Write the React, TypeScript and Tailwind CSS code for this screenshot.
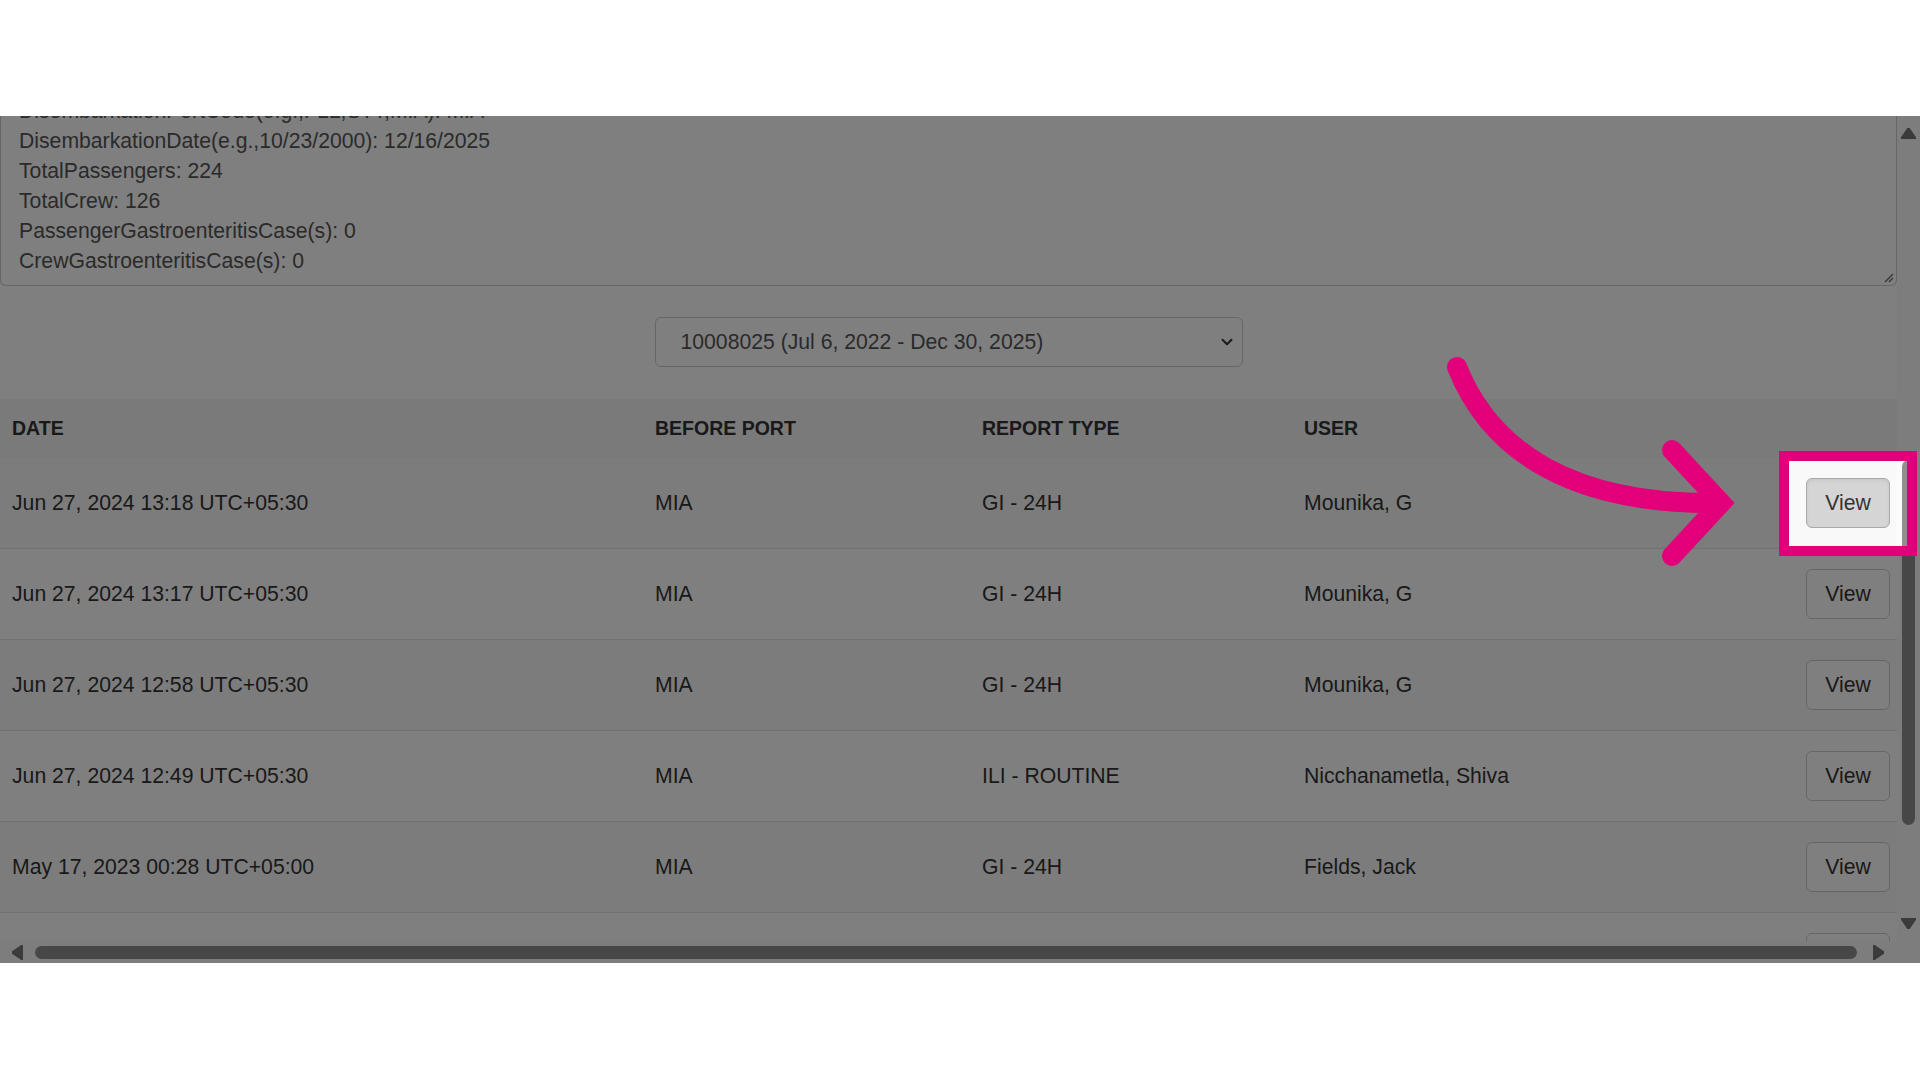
import { ChevronDown } from "lucide-react";

interface ReportRow {
  id: string;
  date: string;
  port: string;
  type: string;
  user: string;
}

const notes = [
  "DisembarkationPortCode(e.g.,FLL,STT,MIA): MIA",
  "DisembarkationDate(e.g.,10/23/2000): 12/16/2025",
  "TotalPassengers: 224",
  "TotalCrew: 126",
  "PassengerGastroenteritisCase(s): 0",
  "CrewGastroenteritisCase(s): 0",
];

const reports: ReportRow[] = [
  { id: "r1", date: "Jun 27, 2024 13:18 UTC+05:30", port: "MIA", type: "GI - 24H", user: "Mounika, G" },
  { id: "r2", date: "Jun 27, 2024 13:17 UTC+05:30", port: "MIA", type: "GI - 24H", user: "Mounika, G" },
  { id: "r3", date: "Jun 27, 2024 12:58 UTC+05:30", port: "MIA", type: "GI - 24H", user: "Mounika, G" },
  { id: "r4", date: "Jun 27, 2024 12:49 UTC+05:30", port: "MIA", type: "ILI - ROUTINE", user: "Nicchanametla, Shiva" },
  { id: "r5", date: "May 17, 2023 00:28 UTC+05:00", port: "MIA", type: "GI - 24H", user: "Fields, Jack" },
];

function Triangle({ dir }: { dir: "up" | "down" | "left" | "right" }) {
  const points = {
    up: "7.5,0 15,11 0,11",
    down: "0,0 15,0 7.5,11",
    left: "11,0 11,15 0,7.5",
    right: "0,0 11,7.5 0,15",
  }[dir];
  const vertical = dir === "up" || dir === "down";
  return (
    <svg width={vertical ? 15 : 11} height={vertical ? 11 : 15} viewBox={vertical ? "0 0 15 11" : "0 0 11 15"}>
      <polygon points={points} fill="#767676" strokeLinejoin="round" stroke="#767676" strokeWidth={2} />
    </svg>
  );
}

function VScrollbar() {
  return (
    <div className="w-[23px] shrink-0 bg-[#fbfbfb] flex flex-col items-center">
      <div className="mt-[12px]">
        <Triangle dir="up" />
      </div>
      <div className="mt-[321px] w-[13px] h-[365px] rounded-full bg-[#8f8f8f]" />
      <div className="mt-[93px]">
        <Triangle dir="down" />
      </div>
    </div>
  );
}

function HScrollbar() {
  return (
    <div className="h-[22px] shrink-0 flex bg-[#fbfbfb]">
      <div className="w-[1897px] flex items-center">
        <div className="ml-[12px]">
          <Triangle dir="left" />
        </div>
        <div className="ml-[12px] w-[1822px] h-[13px] rounded-full bg-[#8f8f8f]" />
        <div className="ml-[16px]">
          <Triangle dir="right" />
        </div>
      </div>
      <div className="flex-1 bg-[#fbfbfb]" />
    </div>
  );
}

function ViewButton({ active }: { active?: boolean }) {
  return (
    <button
      className={`w-[84px] h-[50px] rounded-[6px] border text-[21.2px] text-[#333333] ${
        active
          ? "bg-[#d5d5d5] border-[#a9a9a9] shadow-[inset_0_2px_4px_rgba(0,0,0,0.06)]"
          : "bg-white border-[#cccccc]"
      }`}
    >
      View
    </button>
  );
}

export default function App() {
  return (
    <div className="w-[1920px] h-[1080px] bg-white flex flex-col font-['Liberation_Sans',Arial,sans-serif]">
      <div className="h-[116px] shrink-0" />

      <div className="relative h-[847px] shrink-0 overflow-hidden bg-white flex flex-col">
        <div className="flex flex-1 min-h-0">
          <div className="w-[1897px] shrink-0 overflow-hidden flex flex-col">
            {/* notes textarea, scrolled down */}
            <div className="relative h-[170px] shrink-0 overflow-hidden border border-t-0 border-[#cccccc] rounded-b-[6px]">
              <div className="-mt-[20px] pl-[18px] text-[21.2px] leading-[30px] text-[#555555]">
                {notes.map((line) => (
                  <div key={line}>{line}</div>
                ))}
              </div>
              <svg className="absolute right-[2px] bottom-[2px]" width="11" height="11" viewBox="0 0 11 11">
                <path d="M10 2 L2 10 M10 6 L6 10" stroke="#666" strokeWidth="1.2" />
              </svg>
            </div>

            {/* voyage select */}
            <div className="mt-[31px] mx-auto w-[588px] h-[50px] shrink-0 border border-[#cccccc] rounded-[6px] bg-white flex items-center justify-between pl-[25px] pr-[6px] text-[21.2px] text-[#555555]">
              <span>10008025 (Jul 6, 2022 - Dec 30, 2025)</span>
              <ChevronDown size={18} strokeWidth={2.6} className="text-[#333]" />
            </div>

            {/* reports table */}
            <div className="mt-[32px] shrink-0">
              <div className="grid grid-cols-[643px_327px_322px_1fr_120px] h-[59px] items-center bg-[#f4f4f4] text-[19.5px] font-bold text-[#333333]">
                <div className="pl-[12px]">DATE</div>
                <div className="pl-[12px]">BEFORE PORT</div>
                <div className="pl-[12px]">REPORT TYPE</div>
                <div className="pl-[12px]">USER</div>
                <div />
              </div>
              {reports.map((r, i) => (
                <div
                  key={r.id}
                  className={`grid grid-cols-[643px_327px_322px_1fr_120px] h-[91px] items-center border-b border-[#e3e3e3] text-[21.2px] text-[#333333] ${i % 2 === 0 ? "bg-[#f9f9f9]" : "bg-white"}`}
                >
                  <div className="pl-[12px]">{r.date}</div>
                  <div className="pl-[12px]">{r.port}</div>
                  <div className="pl-[12px]">{r.type}</div>
                  <div className="pl-[12px]">{r.user}</div>
                  <div className="flex justify-end pr-[7px]">
                    <ViewButton active={i === 0} />
                  </div>
                </div>
              ))}
              {/* next row, only its button top shows above the scrollbar */}
              <div className="flex justify-end pr-[7px] pt-[20px] h-[91px]">
                <ViewButton />
              </div>
            </div>
          </div>
          <VScrollbar />
        </div>
        <HScrollbar />

        {/* spotlight on the first View button */}
        <div className="absolute left-[1779px] top-[335px] w-[138px] h-[105px] border-[10px] border-[#e2007a] shadow-[0_0_0_3000px_rgba(0,0,0,0.5)]" />

        {/* pointer arrow */}
        <svg className="absolute inset-0 pointer-events-none" width="1920" height="847" viewBox="0 0 1920 847">
          <path
            d="M1457 251 C1490 334 1570 389 1719 387"
            fill="none"
            stroke="#e2007a"
            strokeWidth="20"
            strokeLinecap="round"
          />
          <path
            d="M1672 334 L1721 387 L1672 440"
            fill="none"
            stroke="#e2007a"
            strokeWidth="20"
            strokeLinecap="round"
            strokeLinejoin="miter"
          />
        </svg>
      </div>

      <div className="flex-1" />
    </div>
  );
}
